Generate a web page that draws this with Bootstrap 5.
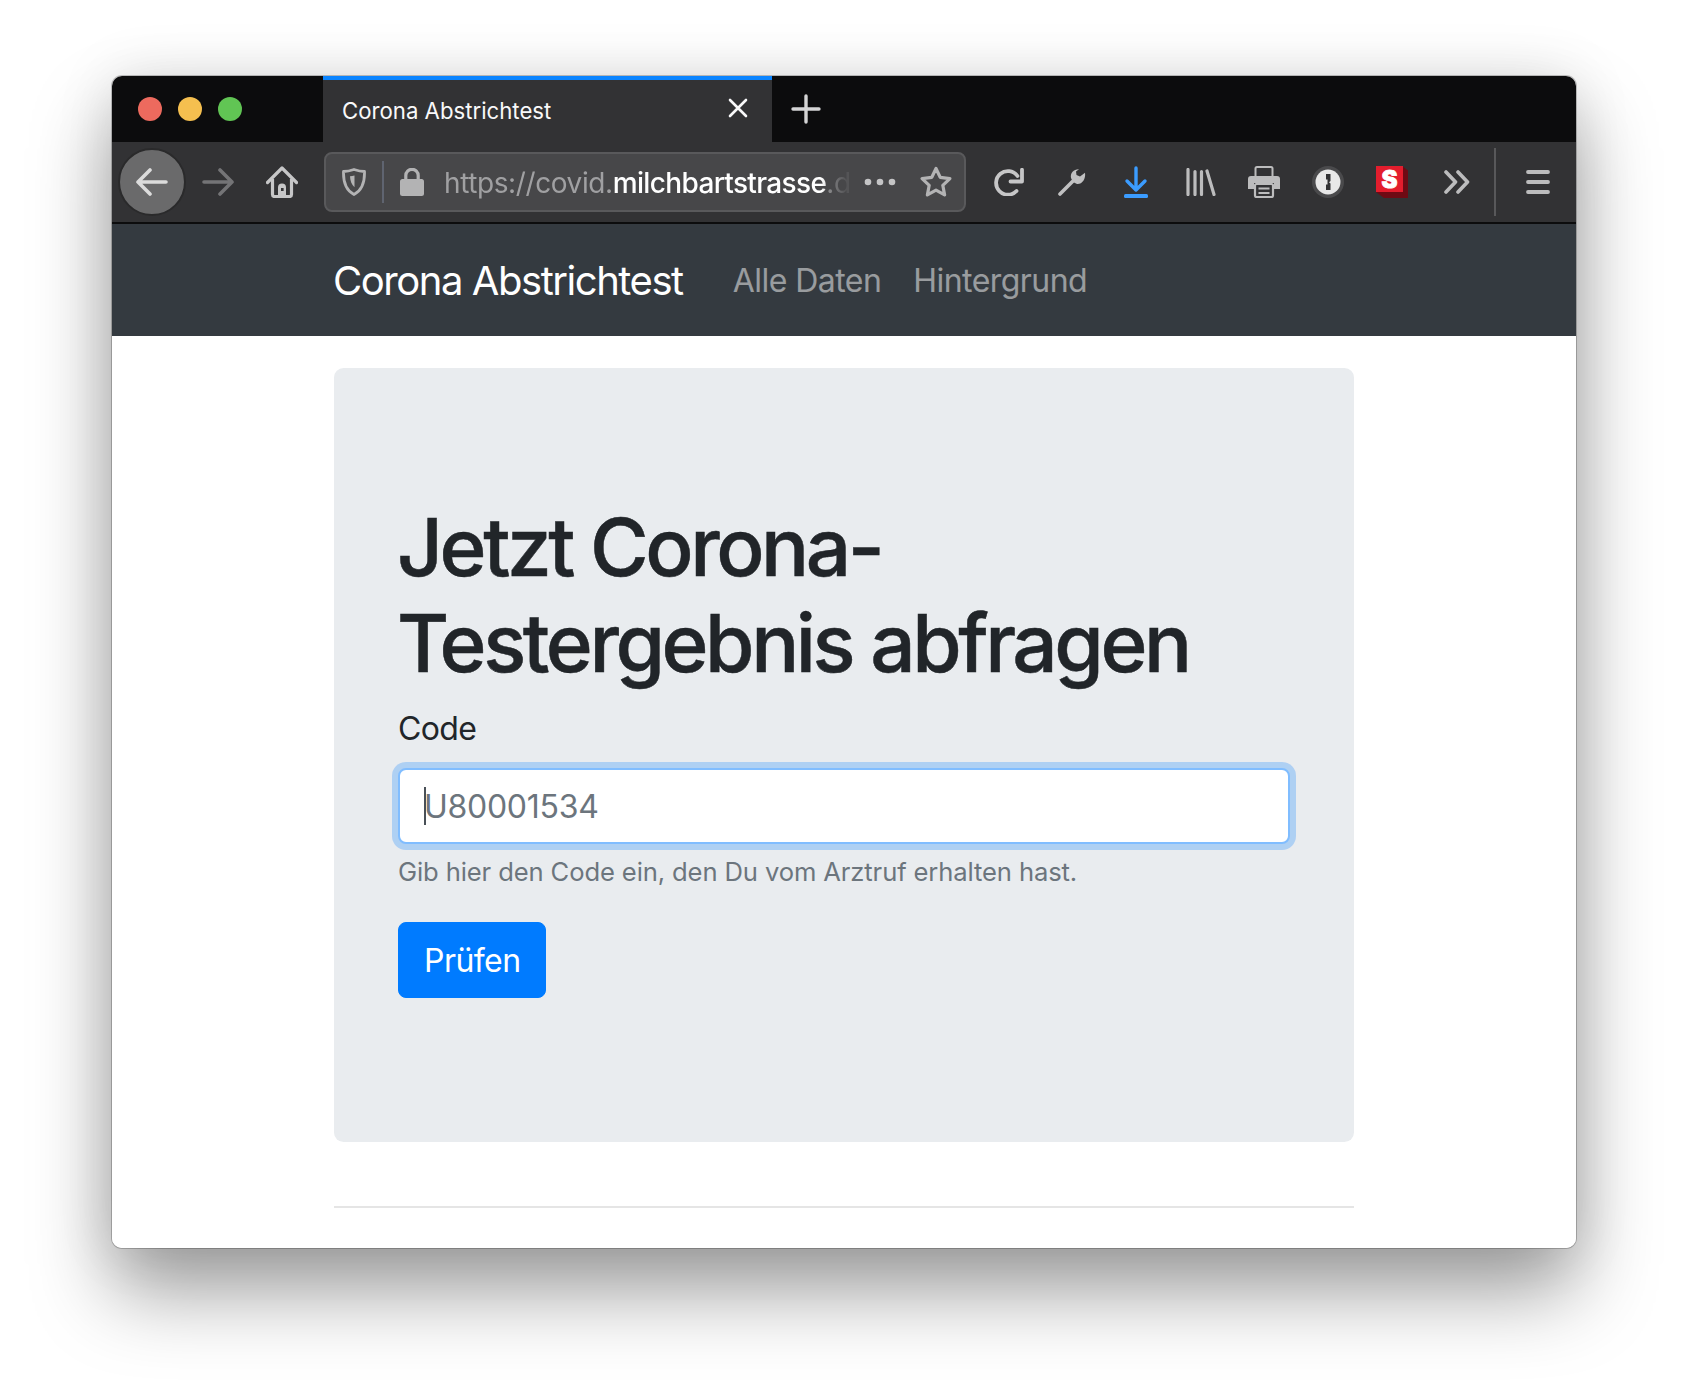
<!DOCTYPE html>
<html lang="de">
<head>
<meta charset="utf-8">
<title>Corona Abstrichtest</title>
<link href="https://cdn.jsdelivr.net/npm/bootstrap@5.3.0/dist/css/bootstrap.min.css" rel="stylesheet">
<style>
html,body{height:100%}
body{background:#fff;padding:76px 112px 148px;font-family:Inter,"Liberation Sans",sans-serif;overflow:hidden}
.browser-win{height:1172px;border-radius:10px;overflow:hidden;background:#fff}
.win-shadow{border-radius:10px;box-shadow:0 0 0 1px rgba(0,0,0,.22),0 44px 80px 0 rgba(0,0,0,.38),0 0 60px rgba(0,0,0,.1)}
.tabstrip{height:66px;background:#0c0c0d;flex:none}
.lights{width:211px;padding-left:26px;gap:16px}
.light{width:24px;height:24px;border-radius:50%}
.tabitem{width:449px;background:#323234;border-top:4px solid #0a84ff;color:#f9f9fa;font-size:22.2px;padding:0 24px 0 19px}
.tabx{display:block;margin-top:-6px}
.tabplus{display:block}
.newtab{width:66px;padding-left:2px}
.toolrow{height:82px;flex:none;background:#323234;border-bottom:2px solid #0c0c0d;padding-left:6px;color:#bcbcbd}
.backbtn{width:68px;height:68px;border-radius:50%;background:#6a6a6b;border:2px solid #2a2a2b}
.ticon{display:block;flex:none}
.urlbar{width:642px;height:60px;margin-left:26px;background:#474749;border:2px solid #59595b;border-radius:8px;padding-left:16px;white-space:nowrap;flex:none}
.urlsep{width:2px;height:42px;background:#5f6470;margin:0 16px}
.urltext{width:410px;margin-left:20px;padding-top:2px;font-size:28px;letter-spacing:-.4px;color:#a0a0a2;-webkit-mask-image:linear-gradient(to right,#000 92%,rgba(0,0,0,.15) 98%)}
.urltext b{font-weight:500;color:#fff;letter-spacing:-.65px}
.meatball{margin-left:10px}
.staric{margin-left:24px}
.vsep{width:2px;height:68px;background:#58585a;margin-left:24px}
.site-nav.navbar{height:112px;padding:2px 0 0;background:#343a40!important;--bs-navbar-nav-link-padding-x:16px}
.site-nav .container{max-width:1080px;padding:0 30px;margin:0 auto}
.site-nav .navbar-brand{font-size:40px;line-height:60px;padding:10px 0;margin:0 34px 0 -1px;color:#fff;letter-spacing:-1.45px}
.site-nav .nav-link{font-size:32px;line-height:48px;padding:16px;color:rgba(255,255,255,.5);letter-spacing:-.55px}
.page-wrap{max-width:1080px;padding:32px 30px 0;margin:0 auto}
.hero{background:#e9ecef;border-radius:9.6px;padding:128px 64px;margin-bottom:64px;height:774px}
.hero h1{font-size:80px;line-height:96px;font-weight:500;color:#212529;margin:0 0 13px -1px;padding-top:3px;letter-spacing:-3.42px;-webkit-text-stroke:.5px #212529}
.hero label{font-size:32px;line-height:48px;color:#212529;margin:0 0 15px;padding-top:1px;display:block;letter-spacing:-.6px}
.hero .form-control{height:76px;font-size:32px;padding:12px 24px;border:2px solid #80bdff;border-radius:8px;color:#6c757d;box-shadow:0 0 0 6px rgba(0,123,255,.25);background:#fff;line-height:48px;letter-spacing:-.28px}
.hero .form-control::placeholder{color:#6c757d;opacity:1}
.caret-mark{width:2px;height:38px;background:#495057;top:19px;left:26px}
.hero .form-text{font-size:25.6px;line-height:38.4px;color:#6c757d;margin-top:9px;margin-bottom:31px;letter-spacing:-.12px}
.hero .btn-primary{height:76px;font-size:32px;padding:2px 24px 0 25px;line-height:48px;border-radius:8px;background:#007bff;border-color:#007bff;color:#fff;letter-spacing:-.55px}
.foot-rule{border:0;border-top:2px solid rgba(0,0,0,.1);opacity:1;margin:0}
</style>
</head>
<body>
<div class="win-shadow">
<div class="browser-win d-flex flex-column">
  <div class="tabstrip d-flex">
    <div class="lights d-flex align-items-center">
      <span class="light" style="background:#ed6a5e"></span><span class="light" style="background:#f5bf4f"></span><span class="light" style="background:#61c554"></span>
    </div>
    <div class="tabitem d-flex align-items-center justify-content-between">
      <span>Corona Abstrichtest</span>
      <svg class="tabx" width="20" height="20" viewBox="0 0 20 20"><path d="M2 2l16 16M18 2L2 18" stroke="#f9f9fa" stroke-width="2.6" stroke-linecap="round"/></svg>
    </div>
    <div class="newtab d-flex align-items-center justify-content-center">
      <svg class="tabplus" width="32" height="32" viewBox="0 0 32 32"><path d="M16 3v26M3 16h26" stroke="#d4d4d5" stroke-width="3.4" stroke-linecap="round"/></svg>
    </div>
  </div>
  <div class="toolrow d-flex align-items-center">
    <div class="backbtn d-flex align-items-center justify-content-center flex-none">
      <svg class="ticon" width="32" height="28" viewBox="0 0 32 28"><path d="M14 2L2 14l12 12M2 14h28" fill="none" stroke="#dcdcdc" stroke-width="3.6" stroke-linecap="round" stroke-linejoin="round"/></svg>
    </div>
    <svg class="ticon" style="margin-left:16px" width="32" height="28" viewBox="0 0 32 28"><path d="M18 2l12 12-12 12M30 14H2" fill="none" stroke="#747476" stroke-width="3.6" stroke-linecap="round" stroke-linejoin="round"/></svg>
    <svg class="ticon" style="margin-left:32px" width="32" height="32" viewBox="0 0 32 32"><path d="M16 2L1.500 16.500M16 2l14.500 14.500" stroke="#c6c6c7" stroke-width="3.200" stroke-linecap="round"/><path d="M6.500 13v15.500a2 2 0 002 2h15a2 2 0 002-2V13" fill="none" stroke="#c6c6c7" stroke-width="3.200"/><path d="M12 30V21.500a4 4 0 018 0V30z" fill="#c6c6c7"/><rect x="15" y="22" width="2.600" height="3" fill="#323234"/></svg>
    <div class="urlbar d-flex align-items-center">
      <svg class="ticon" width="24" height="28" viewBox="0 0 24 28"><path d="M12 1.500C8.500 2.700 5 3.500 1.500 3.500c-.3 10 1.500 18.500 10.500 23 9-4.500 10.800-13 10.500-23C19 3.500 15.500 2.700 12 1.500z" fill="none" stroke="#b3b3b4" stroke-width="2.800" stroke-linejoin="round"/><path d="M12.500 7.500c1.500.4 3 .6 4.500.7-.2 4.500-1.500 8.500-4.500 11z" fill="#b3b3b4" transform="matrix(-1 0 0 1 25 0)"/></svg>
      <span class="urlsep"></span>
      <svg class="ticon" width="24" height="28" viewBox="0 0 24 28"><path d="M5.800 12V7.500a6.200 6.200 0 0112.400 0V12" fill="none" stroke="#b3b3b4" stroke-width="3.200"/><rect x="0" y="11" width="24" height="17" rx="2.500" fill="#b3b3b4"/></svg>
      <div class="urltext">https://covid.<b>milchbartstrasse</b>.d</div>
      <svg class="ticon meatball" width="32" height="8" viewBox="0 0 32 8"><circle cx="4" cy="4" r="3.300" fill="#c4c4c5"/><circle cx="16" cy="4" r="3.300" fill="#c4c4c5"/><circle cx="28" cy="4" r="3.300" fill="#c4c4c5"/></svg>
      <svg class="ticon staric" width="32" height="32" viewBox="0 0 32 32"><path d="M16 2.500l4.200 8.800 9.700 1.300-7.100 6.700 1.800 9.600-8.600-4.700-8.600 4.700 1.800-9.600-7.100-6.700 9.700-1.300z" fill="none" stroke="#b3b3b4" stroke-width="3.200" stroke-linejoin="round"/></svg>
    </div>
    <svg class="ticon" style="margin-left:28px" width="30" height="28" viewBox="0 0 30 28"><path d="M22.500 23A11.800 11.800 0 1123.500 8" fill="none" stroke="#c6c6c7" stroke-width="3.800" stroke-linecap="round"/><path d="M28 1.800V13.500H16.500" fill="none" stroke="#c6c6c7" stroke-width="3.800" stroke-linejoin="round" stroke-linecap="round"/></svg>
    <svg class="ticon" style="margin-left:34px" width="28" height="28" viewBox="0 0 28 28"><path d="M2 26L14.500 13.500" fill="none" stroke="#c0c0c1" stroke-width="3.600" stroke-linecap="round"/><path d="M21 1.300C16 1 12 5 13 10l2 4 4 2c5 .5 9-5 8-11.300l-5 3.800-3.500-1.500-.5-3.500z" fill="#c0c0c1"/></svg>
    <svg class="ticon" style="margin-left:38px" width="24" height="32" viewBox="0 0 24 32"><path d="M12 2v22M3 15l9 9 9-9" fill="none" stroke="#3b9cff" stroke-width="3.400" stroke-linecap="round" stroke-linejoin="round"/><rect x="0" y="28" width="24" height="4" rx="1.500" fill="#3b9cff"/></svg>
    <svg class="ticon" style="margin-left:38px" width="30" height="28" viewBox="0 0 30 28"><path d="M2 1.500v25M9 3.500v23M15.500 3.500v23M21 3l7 23.500" fill="none" stroke="#bcbcbd" stroke-width="3.200" stroke-linecap="round"/></svg>
    <svg class="ticon" style="margin-left:32px" width="32" height="32" viewBox="0 0 32 32"><path d="M7.500 10V2.500a1.500 1.500 0 011.500-1.500h14a1.500 1.500 0 011.500 1.500V10" fill="none" stroke="#bcbcbd" stroke-width="2"/><path d="M3 10h26a3 3 0 013 3v10h-6v-6H6v6H0V13a3 3 0 013-3z" fill="#bcbcbd"/><rect x="7" y="18" width="18" height="13" rx="1.500" fill="none" stroke="#bcbcbd" stroke-width="2.200"/><path d="M10.500 22.500h11M10.500 27h11" stroke="#bcbcbd" stroke-width="2"/></svg>
    <svg class="ticon" style="margin-left:32px" width="32" height="32" viewBox="0 0 32 32"><circle cx="16" cy="16" r="16" fill="#4a4a4c"/><circle cx="16" cy="16" r="12.500" fill="#e8e8e8"/><path d="M14 8h4.500v7l-1.500 1.200 1.500 1.300V24H14v-5.500h1.500v-5H14z" fill="#323234"/></svg>
    <svg class="ticon" style="margin-left:32px" width="32" height="32" viewBox="0 0 32 32"><path d="M26 0l6 4.500V32H8L0 26h26z" fill="#6e0a14"/><rect width="27" height="26" fill="#e31d2d"/><text x="13.500" y="21.500" text-anchor="middle" font-family="Inter,Liberation Sans" font-weight="900" font-size="24" stroke="#fff" stroke-width=".8" fill="#fff">S</text></svg>
    <svg class="ticon" style="margin-left:36px" width="26" height="24" viewBox="0 0 26 24"><path d="M2 2l9.500 10L2 22M14 2l9.500 10L14 22" fill="none" stroke="#bcbcbd" stroke-width="3.600" stroke-linecap="round" stroke-linejoin="round"/></svg>
    <span class="vsep"></span>
    <svg class="ticon" style="margin-left:30px" width="24" height="24" viewBox="0 0 24 24"><path d="M2 2h20M2 12h20M2 22h20" stroke="#bcbcbd" stroke-width="3.800" stroke-linecap="round"/></svg>
  </div>
  <nav class="navbar navbar-expand navbar-dark bg-dark site-nav">
    <div class="container">
      <a class="navbar-brand" href="#">Corona Abstrichtest</a>
      <ul class="navbar-nav me-auto">
        <li class="nav-item"><a class="nav-link" href="#">Alle Daten</a></li>
        <li class="nav-item"><a class="nav-link" href="#">Hintergrund</a></li>
      </ul>
    </div>
  </nav>
  <main class="page-wrap w-100">
    <div class="hero">
      <h1>Jetzt Corona-Testergebnis abfragen</h1>
      <form>
        <label for="codeinput">Code</label>
        <div class="position-relative">
          <input id="codeinput" class="form-control" type="text" placeholder="U80001534">
          <span class="caret-mark position-absolute"></span>
        </div>
        <div class="form-text">Gib hier den Code ein, den Du vom Arztruf erhalten hast.</div>
        <button type="button" class="btn btn-primary">Prüfen</button>
      </form>
    </div>
    <hr class="foot-rule">
  </main>
</div>
</div>
<script src="https://cdn.jsdelivr.net/npm/bootstrap@5.3.0/dist/js/bootstrap.bundle.min.js"></script>
</body>
</html>
